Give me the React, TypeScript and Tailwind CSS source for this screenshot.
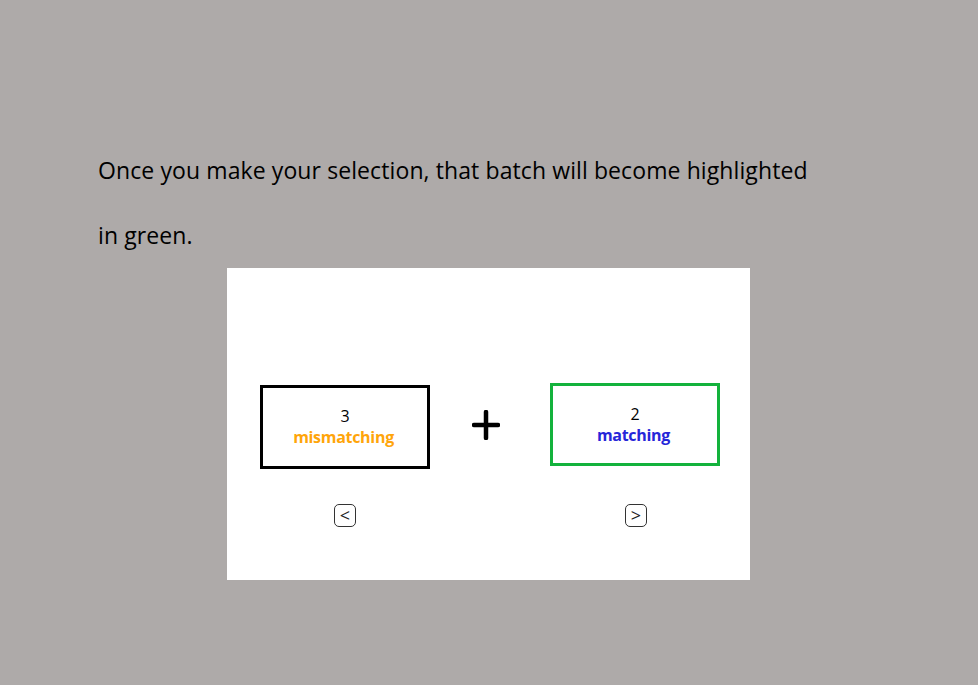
import React from "react";

export default function App() {
  return (
    <div className="w-[978px] h-[685px] bg-[#aeaaa9] overflow-hidden" style={{ fontFamily: '"Open Sans", "Noto Sans", sans-serif' }}>
      <div className="pt-[138px] pl-[98px] text-[23px] leading-[65px] text-black tracking-[0.1px]">
        <p className="whitespace-nowrap">Once you make your selection, that batch will become highlighted</p>
        <p>in green.</p>
      </div>
      <div className="ml-[227px] mt-[0px] w-[523px] h-[312px] bg-white pt-[115px]">
        <div className="flex items-start">
          <div className="ml-[33px] mt-[2px] w-[170px] h-[84px] border-[3px] border-black flex flex-col items-center justify-center">
            <span className="text-[16px] leading-[22px] text-black -mt-[2px]">3</span>
            <span className="text-[16px] leading-[20px] font-bold text-[#ffa50a] tracking-[-0.3px] -ml-[3px]">mismatching</span>
          </div>
          <div className="w-[120px] h-[84px] flex items-center justify-center pr-[8px]">
            <svg width="28" height="30" viewBox="0 0 28 30">
              <path d="M14 2 V28 M2 15 H26" stroke="#000" strokeWidth="4.5" strokeLinecap="round" />
            </svg>
          </div>
          <div className="w-[170px] h-[83px] border-[3px] border-[#13b23c] flex flex-col items-center justify-center">
            <span className="text-[16px] leading-[22px] text-black -mt-[2px]">2</span>
            <span className="text-[16px] leading-[20px] font-bold text-[#2626d9] tracking-[-0.3px] -ml-[3px]">matching</span>
          </div>
        </div>
        <div className="flex mt-[35px]">
          <div className="ml-[107px] w-[22px] h-[23px] border-[1.5px] border-[#333] rounded-[5px] flex items-center justify-center text-[18px] leading-none text-[#222] pb-[2px]">&lt;</div>
          <div className="ml-[269px] w-[22px] h-[23px] border-[1.5px] border-[#333] rounded-[5px] flex items-center justify-center text-[18px] leading-none text-[#222] pb-[2px]">&gt;</div>
        </div>
      </div>
    </div>
  );
}
